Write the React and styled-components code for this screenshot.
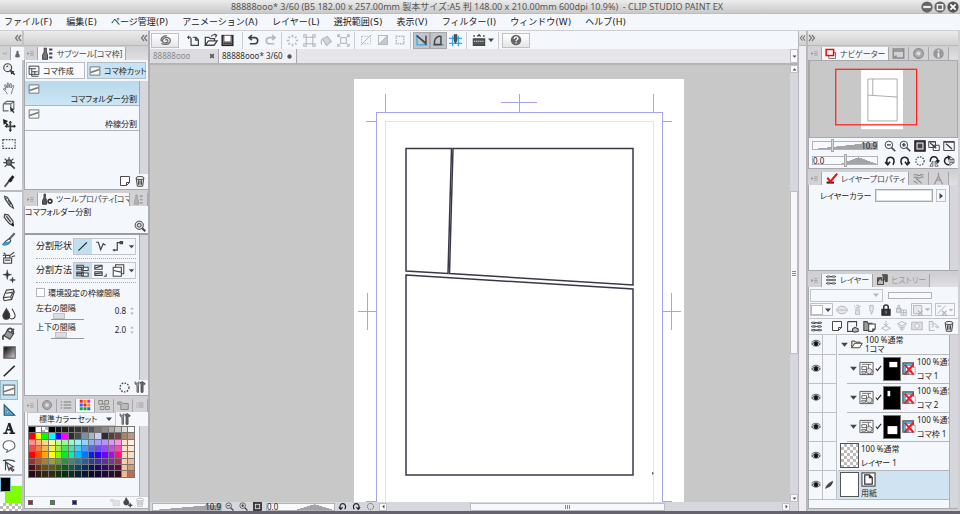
import React, { useState } from 'react';
import styled, { createGlobalStyle, css } from 'styled-components';

const GlobalStyle = createGlobalStyle`
  * {
    box-sizing: border-box;
  }

  body {
    margin: 0;
    color: #222;
    background: #d2d2d6;
    font-family: 'Noto Sans', 'Noto Sans CJK JP', sans-serif;
    font-size: 9px;
    line-height: 12px;
  }

  button, input, select {
    font: inherit;
    color: inherit;
    margin: 0;
    padding: 0;
    border: 0;
    border-radius: 0;
    background: none;
  }

  ul {
    margin: 0;
    padding: 0;
    list-style: none;
  }
`;

/* ---------- icons, all drawn on a 16 x 16 grid ---------- */

const Svg = styled.svg`
  display: block;
  flex: none;
  width: ${({ $w }) => $w}px;
  height: ${({ $h }) => $h}px;
  fill: none;
  stroke: ${({ $color }) => $color};
  stroke-width: 1.3;
  opacity: ${({ $faded }) => ($faded ? 0.35 : 1)};
`;

const icons = {
  zoom: <><circle cx="6.5" cy="6.5" r="4.5" fill="#eee" /><path d="M5 5.5l2-1" /><path d="M9.5 9.5l1 5 1.3-1.7 2.2 2.2 1-1-2.2-2.2 1.7-1z" fill="#222" stroke="none" /><path d="M9 9l4 4" strokeWidth="2" /></>,
  hand: <path d="M6 15c-1-3-3-4-4.500-6 1-1 2 0 3 1L3 4.500c1-.8 1.500 0 1.800 1L6 8 6 2.500c1-.8 1.600 0 1.700 1L8 7.500 9.500 3c1-.4 1.500.3 1.200 1.300L10 8l2.500-3c1-.2 1.300.6.9 1.500L11.500 11c0 2-.5 2-1 4" strokeWidth="1" stroke="#666" />,
  cube: <><path d="M1.500 4.500l4-3h8v8.500l-2 2M1.500 4.500v8h6M1.500 4.500h8.500v5M10 4.500l3.500-3" stroke="#666" /><path d="M9 8l1 6 1.300-1.500L13 15l1.200-1-1.700-2.500 1.500-.7z" fill="#333" stroke="none" /></>,
  move: <><path d="M1 1l1 7 1.600-1.600L6 9l1.400-1.400L4.800 5.200 7 3.500z" fill="#222" stroke="none" /><path d="M9.500 5v9M5 9.500h9" strokeWidth="2" /><path d="M9.500 3l2 2.500h-4zM9.500 16l2-2.500h-4zM3 9.500L5.500 7.500v4zM16 9.500l-2.500-2v4z" fill="#222" stroke="none" /></>,
  marquee: <rect x="1" y="3" width="14" height="10" strokeDasharray="2 1.300" />,
  wand: <><path d="M8 1v4M1.500 7.500h4M10 7.500h4.500M3 3l3 3M13 3l-3 3M3 12.500l3-3" /><circle cx="8" cy="7.500" r="3" fill="#777" /><path d="M9 9l5.500 5.500" strokeWidth="2" /></>,
  dropper: <><path d="M3 14.500L9 7" strokeWidth="2" /><path d="M8 6l3 2.500M9.500 7L13 2.500" strokeWidth="3.400" stroke="#222" /></>,
  pen: <><path d="M3 1.500l3 1 5.500 8.500L13 15l-4-2.500L3.500 4.500z" fill="#e8e8e8" /><path d="M5.500 3.500L3.800 5M10.500 9.500l-2.300 1.800M7 6l3 4.500" /></>,
  pencil: <><path d="M3 1.500L7 2l5.500 7 .5 5.500-4.800-2.500L2.500 5z" fill="#ddd" /><path d="M11 12l2 2.500" stroke="#222" strokeWidth="2.500" /><path d="M5 3.500l5 7" /></>,
  brush: <><path d="M14.500 1.500l-6 6.500" strokeWidth="2.400" stroke="#666" /><path d="M8.500 7.500L5 10c-2 1-2 3-4 4 4 1.500 7 0 9-4z" fill="#fff" /><path d="M1 14.500c3 1 6 0 7-3-2 0-4 0-7 3z" fill="#2d9be8" stroke="#2d9be8" /></>,
  airbrush: <><path d="M2 8h9v6H2zM4 8V5h5v3M9 5l5-3.500M11 6.500l4-1M2 2l2 2M1 5h2" /><path d="M3.500 10.500h6" /></>,
  sparkle: <><path d="M6 1l1 4.500 4 1-4 1-1 4.500-1-4.500-4-1 4-1z" fill="#333" strokeWidth=".6" /><path d="M12 9l.8 2.700 2.700.8-2.700.8L12 16l-.8-2.700-2.700-.8 2.700-.8z" fill="#333" strokeWidth=".4" /></>,
  eraser: <><path d="M5 2.500l8-1 1 3L11 13l-8.500 1.500L1.500 11z" fill="#fff" /><path d="M2 11l8-1 3.500-7M10 10l1 3M4 6l7.500-1" /></>,
  drops: <><path d="M5 2c2.500 4 4 5.500 4 8a4 4 0 0 1-8 0C1 7.500 3 6 5 2z" fill="#333" /><path d="M11.500 2C13.500 6 15 7.500 15 10a3.500 3.500 0 0 1-5.500 3" fill="#fff" /></>,
  fill: <><path d="M6 4l7 4-4 6-6.500-4z" fill="#999" /><path d="M6 4c2-4 7-3 7 4M3 9c-3 1-2 4-1.500 5.500" strokeWidth="2" /><path d="M10 6l4-4" /></>,
  line: <path d="M2 14L14.500 2" strokeWidth="1.800" stroke="#222" />,
  frame: <><path d="M1.500 2.500h13v11h-13z" fill="#f8f8f8" stroke="#777" /><path d="M2 10l12-4" stroke="#777" strokeWidth="2" /></>,
  ruler: <><path d="M2.500 2v12h12z" fill="#57b4ee" stroke="#256" /><path d="M5 8.500V11.500h3.500z" fill="#fff" strokeWidth=".6" /></>,
  text: <><path d="M1.500 14h5M8.500 14h6.500M4 14L8 2.500M6 10h4.500" strokeWidth="1.500" stroke="#222" /><path d="M8 2.500L12 14" strokeWidth="3" stroke="#222" /></>,
  balloon: <path d="M8 2c8 0 9 9 2 10.500L5.500 15l.8-2.500C-1 11 0 2 8 2z" fill="#fff" stroke="#666" />,
  correct: <><path d="M1 3c6-1.500 11-1 14 1M4 3v11" /><path d="M5 5l8 5-3 .8 3.500 3-1.500 1.200-3-3.300L8 14z" fill="#eee" /></>,
  swirl: <path d="M8 8c0-2 3-1 3 .5 0 2-3 3-5 2.200C3 9.500 4 5 8.500 4.500S15 7 13.500 10 6 14 3 11.500M3 9C1 5 6 2 10 2.500" strokeWidth="1.500" stroke="#666" />,
  newDoc: <path d="M2 6V2M0 4h5M5 5v9h9V7l-3-3H7M10.500 4v3.500H14" strokeWidth="1.500" />,
  open: <><path d="M1.500 14V5h4l1.500 1.500h5V9M1.500 14L5 9h10l-3.500 5z" fill="#fff" strokeWidth="1.500" /><path d="M8 4c2-3 4-2 6-1.500M12 1l2.500 1.500L13 5" /></>,
  save: <><rect x="1.500" y="2" width="13" height="12" strokeWidth="1.800" stroke="#222" fill="#ddd" /><path d="M3.500 2v8h9V2" fill="#fff" /><path d="M2 12h12" strokeWidth="2" /></>,
  undo: <path d="M3.500 12H10a3.800 3.800 0 0 0 0-7.500H3M6 1.500L2.500 4.500 6 7.500" strokeWidth="2" />,
  redo: <path d="M12.500 12H6a3.800 3.800 0 0 1 0-7.500h7M10 1.500l3.500 3-3.500 3" strokeWidth="2" />,
  spinner: <path d="M8 1v3M8 12v3M1 8h3M12 8h3M3 3l2 2M11 11l2 2M3 13l2-2M11 5l2-2" strokeWidth="1.900" />,
  ring: <circle cx="8" cy="8" r="5.500" strokeDasharray="2 1.600" strokeWidth="1.600" />,
  nodes: <><rect x="4" y="4" width="8" height="8" /><path d="M1 1h3v3H1zM12 1h3v3h-3zM1 12h3v3H1zM12 12h3v3h-3z" /></>,
  bucket: <path d="M3 6l6-3 5 6-6 5zM3 6c-2 2-2 4-1 7" fill="#999" />,
  warp: <><rect x="4.500" y="4.500" width="7" height="7" /><path d="M1 1l3 3M15 1l-3 3M1 15l3-3M15 15l-3-3M1 4V1h3M12 1h3v3M1 12v3h3M12 15h3v-3" /></>,
  deselect: <><path d="M2 3h12v10H2z" strokeDasharray="2 1.500" /><path d="M1 15L15 1" /></>,
  invert: <><rect x="2" y="2" width="12" height="12" /><path d="M14 2v12H2z" fill="#777" /></>,
  dotted: <rect x="3" y="3" width="10" height="10" strokeDasharray="2 1.300" strokeWidth="2" />,
  snapRuler: <><path d="M2.500 2v11.500h11z" stroke="#2ea8f0" strokeWidth="1.500" /><path d="M2 2l11 9M13.500 2v11.500" strokeWidth="1.800" /></>,
  snapCurve: <><path d="M1 13.500h13.500" stroke="#2ea8f0" strokeWidth="1.800" /><path d="M3 13V9c1-5 5-7 8-6v10z" strokeWidth="1.800" /></>,
  snapGrid: <><path d="M4.500 2v13M11.500 2v13M0 5.500h16M0 11.500h16" stroke="#2ea8f0" strokeWidth="1.500" /><path d="M6.500 1h3v7L8 11 6.500 8z" fill="#555" /></>,
  keyboard: <><path d="M1 14V6h14v8z" fill="#555" /><path d="M2 9h12" stroke="#eee" strokeDasharray="1.500 1" /><path d="M1 2.500h2M13 2.500h2M6 3l2-2 2 2" strokeWidth="1.800" /></>,
  help: <><circle cx="8" cy="8" r="7" fill="#666" stroke="none" /><path d="M5.500 6.500c0-3.500 5-3.500 5-.5 0 1.700-2.500 1.700-2.500 3.500M8 11v1.600" stroke="#fff" strokeWidth="1.700" /></>,
  menu: <><path d="M1 4l4 4-4 4z" fill="#888" stroke="none" /><path d="M7 4h8M7 8h8M7 12h8" stroke="#888" /></>,
  penTool: <><path d="M6.500 6V1.500h3V6L12 10v5H4v-5z" fill="#777" /><path d="M5 10h6" /></>,
  subTool: <><path d="M4 6V1.500h2.500V6L8 10v5H2v-5z" fill="#777" /><path d="M10 3h4M10 8h4M10 13h4" strokeWidth="2.400" /></>,
  toolProp: <><path d="M4 6V1.500h2V6l1.500 4v5H2v-5z" fill="#555" /><circle cx="12" cy="11" r="2.500" strokeWidth="2.200" stroke="#333" /></>,
  frameMake: <><path d="M1.500 1.500h13v11h-13zM1.500 5h9M5 5v10h9M9 8v5" /><path d="M5 9h8" /></>,
  page: <path d="M2 2h12v8l-4 4H2zM14 10h-4v4" fill="#fff" />,
  trash: <><path d="M3 5l1.500 10h7L13 5z" fill="#e4e4e4" /><ellipse cx="8" cy="4" rx="5.500" ry="2" fill="#fff" /><path d="M6 7v6M8 7v6M10 7v6" /></>,
  wrench: <><path d="M4 15V6L1.500 4V1l1.500 2h2l1.500-2v3L6 6v9z" fill="#999" stroke="#666" /><path d="M8 2l4-1 3 3-2 .5-1-1V15h-2.500V4z" fill="#777" /></>,
  searchMark: <><circle cx="7" cy="7" r="5.500" fill="#ddd" /><circle cx="7" cy="7" r="2.500" /><path d="M11 11l4 4" strokeWidth="2.600" /></>,
  poly: <path d="M1.500 3h3l3 10L11 5l3 2" strokeWidth="1.600" />,
  step: <path d="M1 13.500h6V3.500h6M3 12v3M11 2v3h3v-3z" strokeWidth="1.600" />,
  splitA: <><path d="M1 1.500h8v5H1zM7 4h8v4H7zM1 10h8v4.500H1zM7 11h8v4H7z" fill="#fff" /><path d="M1 4h6M1 12h6" strokeWidth="2" /></>,
  splitB: <><path d="M1 1.500h9v5H1zM1 9.500h9V14H1z" fill="#fff" /><path d="M1 5l9-3M1 12l9-1" strokeWidth="1.600" /><path d="M12 15h3v-3" /></>,
  splitC: <><path d="M4.500 1h10v11h-10z" /><path d="M1.500 4h10v11h-10z" fill="#fff" /><path d="M2 8l9 2" /></>,
  ball: <><circle cx="8" cy="8" r="6" fill="#aaa" stroke="#888" /><circle cx="8" cy="8" r="2.500" fill="#ddd" stroke="none" /></>,
  lines: <path d="M1 4h2M5 4h10M1 8h2M5 8h10M1 12h2M5 12h10" stroke="#999" strokeWidth="1.700" />,
  colorSet: <><path d="M1 1h4v4H1zM6 6h4v4H6z" fill="#e22" stroke="none" /><path d="M6 1h4v4H6zM11 6h4v4h-4z" fill="#f80" stroke="none" /><path d="M11 1h4v4h-4z" fill="#e2c" stroke="none" /><path d="M1 6h4v4H1zM11 11h4v4h-4z" fill="#26e" stroke="none" /><path d="M1 11h4v4H1zM6 11h4v4H6z" fill="#1a3" stroke="none" /></>,
  blocks: <path d="M1 2h5v5H1zM9 2h5v5H9zM3 10h5v4H3zM10 10h5v4h-5zM6 5l4 5" stroke="#888" fill="#ccc" />,
  folderTab: <path d="M1 4h5l1 2h8v8H5V7H1z" stroke="#888" fill="#bbb" />,
  ink: <><path d="M6 1c2 4 4 5 4 7.500a3.800 3.800 0 0 1-7.500 0C2.500 6 5 5 6 1z" fill="#444" /><path d="M12 9v6M9 12h6" strokeWidth="2" /></>,
  naviMark: <><path d="M5 6h9v8H5z" stroke="#777" /><rect x="1.500" y="2" width="10" height="8" stroke="#f00" strokeWidth="2" fill="#fff" /></>,
  windowTab: <path d="M1.500 2.500h13v11h-13zM1.500 5h13M3 12l3-1" stroke="#888" strokeWidth="1.700" />,
  info: <><circle cx="8" cy="8" r="6.500" fill="#999" stroke="none" /><path d="M8 7v6M8 3.500v2" stroke="#eee" strokeWidth="2.200" /></>,
  minusLens: <><circle cx="6.500" cy="6.500" r="5" /><path d="M4 6.500h5" strokeWidth="1.800" /><path d="M10 10l5 5" strokeWidth="2.200" /></>,
  plusLens: <><circle cx="6.500" cy="6.500" r="5" /><path d="M4 6.500h5M6.500 4v5" strokeWidth="1.800" /><path d="M10 10l5 5" strokeWidth="2.200" /></>,
  fit: <><rect x="1" y="1" width="14" height="14" fill="#333" stroke="#222" /><rect x="4" y="4" width="8" height="8" fill="#444" stroke="#fff" /></>,
  fitBoth: <><path d="M1 2h9v8H1zM7 7h8v7H7z" fill="#fff" /><path d="M3 4l8 7M1 2.500h9" strokeWidth="1.900" /></>,
  fitOne: <><path d="M1 2h14v12H1z" /><path d="M1 2.500h14M4 5l8 7" strokeWidth="2" /></>,
  rotL: <path d="M5 12.500C2 8 4 3 8.500 3S15 8 12 13M1.500 9.500L5 13l3-4" strokeWidth="2.100" stroke="#222" />,
  rotR: <path d="M11 12.500C14 8 12 3 7.500 3S1 8 4 13M14.500 9.500L11 13 8 9" strokeWidth="2.100" stroke="#222" />,
  flipH: <><path d="M3 9c0-9 10-9 10 0M11 7l2 3 2-3" strokeWidth="2" stroke="#222" /><path d="M6.500 8L2.500 15h4zM9.500 8l4 7h-4z" strokeWidth="1" /></>,
  flipV: <><path d="M8 3C0 2 0 13 8 13M6 1l3 2-2 3" strokeWidth="2" stroke="#222" /><path d="M9 2l6 4H9zM9 14l6-4H9zM7 8h9" strokeWidth="1" /></>,
  redTick: <><path d="M2 13h9" stroke="#222" strokeWidth="2.500" /><path d="M3 7l3.500 5L15 2" stroke="#e11" strokeWidth="2.600" /></>,
  hatch: <path d="M2 4c3-3 5 2 8 0s4 0 4 0M2 7c3-3 5 2 8 0s4 0 4 0M5 8l7 6M2 11l5 3" stroke="#888" />,
  compass: <path d="M8 1v4M8 5L3 15M8 5l5 10M6 10h4" stroke="#999" strokeWidth="1.700" />,
  layers: <path d="M1.500 3.500c4-3 9 3 13 0M1.500 8c4-3 9 3 13 0M1.500 12.500c4-3 9 3 13 0M14.500 3.500c-4-3-9 3-13 0M14.500 8c-4-3-9 3-13 0M14.500 12.500c-4-3-9 3-13 0" strokeWidth="1.200" />,
  history: <><path d="M2 5h8v9H2z" fill="#bbb" /><path d="M8 1h7v9h-3" fill="#555" /><path d="M3 10c0-5 5-5 5-1" strokeWidth="2" /></>,
  lens: <><ellipse cx="8" cy="8" rx="7" ry="5" fill="#ccc" /><path d="M2 8h12" /></>,
  lighthouse: <path d="M6 5h4l1 10H5zM6 2h4v3M3 3l2 1M13 3l-2 1M6 9h4" fill="#ccc" />,
  pin: <path d="M5.500 2h5v6L8 15 5.500 8z" fill="#ccc" />,
  lock: <><path d="M5 8V4c0-3.500 6-3.500 6 0v4" strokeWidth="2" stroke="#333" /><rect x="2.500" y="7" width="11" height="8" fill="#333" stroke="#222" /><path d="M8 9v4" stroke="#999" /></>,
  lockAlpha: <><path d="M2 6h6v5H2zM3.500 6V3c0-2 3-2 3 0v3" fill="#aaa" /><path d="M8 8h7v7H8zM8 11.500h7M11.500 8v7" /></>,
  maskX: <><path d="M2 2h11v11H2z" fill="#ccc" /><path d="M8 9l6 6M14 9l-6 6" strokeWidth="1.800" /></>,
  rulerX: <><path d="M2 13L13 2M2 3h5" /><path d="M8 9l6 6M14 9l-6 6" strokeWidth="1.800" /></>,
  vectorPage: <><path d="M2 2h11v6M9 14H2V2" fill="#fff" /><path d="M8 11l3-2 4 2v3l-4 1-3-1z" fill="#bbb" /></>,
  newFolder: <><path d="M1 2h4l1 2h5v9H1z" fill="#999" /><path d="M7 5h8v6l-3 3H7zM15 11h-3v3" fill="#fff" /></>,
  transfer: <path d="M2 11l6 3 6-3-6-3zM8 1v7M5 5l3 3 3-3" />,
  merge: <path d="M2 5l6-3 6 3-6 3zM8 8v6M5 11l3 3 3-3M3 8l5 3 5-3" />,
  mask: <><rect x="1" y="3" width="14" height="10" fill="#bbb" /><circle cx="8" cy="8" r="3" fill="#fff" /></>,
  applyMask: <path d="M3 14V2h5v8M8 5c5 0 6 2 6 5M11 8l3 3 2-3M3 14h7" fill="#ddd" />,
  eye: <><path d="M1 8c3.500-5 10.500-5 14 0-3.500 4.500-10.500 4.500-14 0z" fill="#ccc" stroke="#333" /><circle cx="8" cy="7.500" r="3" fill="#111" stroke="#111" /><path d="M1 5c4-4 10-4 14 0" stroke="#444" /></>,
  folder: <><path d="M1 13V4h4l1.500 1.500H12V8" fill="#ddd" /><path d="M1 13l4-6h10l-3.500 6z" fill="#fffbe8" /></>,
  comicFolder: <><path d="M1 1.500h14v13H1z" fill="#fff" stroke="#555" strokeWidth="1" /><path d="M3 3.500h10M3 6h5v3H3zM10 3.500v4M3 11h4v2H3z" strokeWidth="1" stroke="#666" /><path d="M8 9l3-1.500 3 2v3l-3 1.500-3-1.500z" fill="#ddd" strokeWidth=".8" /></>,
  check: <path d="M2 8l3.500 5L14 2" strokeWidth="2.400" stroke="#222" />,
  noRuler: <><path d="M1 1h12v13H1z" fill="#5cb4e4" stroke="#555" /><path d="M8 6h7v8H8zM4 4h7v7H4z" fill="#fff" stroke="#888" strokeWidth=".8" /><path d="M3 3l10 11M13 3L3 14" stroke="#e8202a" strokeWidth="2.300" /></>,
  paper: <><path d="M1 1h14v14H1z" fill="#fff" stroke="#555" /><path d="M4 3h5l3 3v7H4zM9 3v3h3" fill="#fff" stroke="#333" /></>,
  quill: <path d="M1 15c1-5 5-10 13-13-1 6-5 10-9 11z" fill="#444" stroke="#222" strokeWidth=".8" />,
  chevL: <path d="M8 2L3 8l5 6M14 2L9 8l5 6" strokeWidth="2.400" stroke="#777" />,
  chevR: <path d="M2 2l5 6-5 6M8 2l5 6-5 6" strokeWidth="2.400" stroke="#777" />,
  down: <path d="M2 5h12l-6 7z" fill="#444" stroke="none" />,
  up: <path d="M2 11h12L8 4z" fill="#444" stroke="none" />,
  left: <path d="M11 2v12L4 8z" fill="#444" stroke="none" />,
  right: <path d="M5 2v12l7-6z" fill="#444" stroke="none" />,
  winMin: <><circle cx="8" cy="8" r="7.500" fill="#666" stroke="none" /><path d="M3 8h10" stroke="#eee" strokeWidth="3" /></>,
  winMax: <><circle cx="8" cy="8" r="7.500" fill="#666" stroke="none" /><rect x="4.500" y="5" width="7" height="6.500" stroke="#eee" strokeWidth="2" /></>,
  winClose: <><circle cx="8" cy="8" r="7.500" fill="#555" stroke="none" /><path d="M4.500 4.500l7 7M11.500 4.500l-7 7" stroke="#fff" strokeWidth="2.400" /></>,
  cross: <path d="M3 3l10 10M13 3L3 13" strokeWidth="4" stroke="#555" />,
  dot: <circle cx="8" cy="8" r="5" fill="#555" stroke="none" />,
};

const Icon = ({ name, size = 12, height, color = '#444', faded }) => (
  <Svg viewBox="0 0 16 16" $w={size} $h={height || size} $color={color} $faded={faded} aria-hidden="true">
    {icons[name]}
  </Svg>
);

/* ---------- window frame ---------- */

const AppWindow = styled.div`
  display: flex;
  flex-direction: column;
  min-height: 100vh;
  border-bottom: 3px solid #66626e;
`;

const TitleBar = styled.header`
  display: flex;
  align-items: center;
  height: 14px;
  padding-left: 41px;
  color: #555;
  background: linear-gradient(#ececec, #c9c9c9);
  border-bottom: 1px solid #bdbdbd;
`;

const Title = styled.h1`
  flex: 1;
  margin: 0;
  padding-right: 8px;
  text-align: center;
  font-size: 9px;
  font-weight: 400;
  white-space: pre;
`;

const WindowButtons = styled.div`
  display: flex;
  gap: 1px;
  padding-right: 1px;
`;

const PlainButton = styled.button`
  display: flex;
  align-items: center;
  justify-content: center;
`;

const MenuBar = styled.nav`
  display: flex;
  align-items: center;
  gap: 14px;
  height: 17px;
  padding: 0 4px;
  font-family: 'DejaVu Sans', 'Noto Sans CJK JP', sans-serif;
  background: #f4f7fc;
  border-bottom: 1px solid #cfcfd3;
`;

const MenuItem = styled.button`
  white-space: nowrap;
  line-height: 14px;
`;

const Workspace = styled.main`
  flex: 1;
  display: flex;
`;

const DockHeader = styled.div`
  display: flex;
  align-items: center;
  justify-content: ${({ $side }) => ($side === 'left' ? 'flex-start' : 'flex-end')};
  height: 15px;
  background: linear-gradient(#ececec, #d0d0d2);
  border-bottom: 1px solid #b8b8bc;
`;

const TabStrip = styled.div`
  display: flex;
  height: 14px;
  padding-top: 1px;
  background: linear-gradient(#cfcfd2, #e0e0e2);
`;

const Tab = styled.button`
  display: flex;
  align-items: center;
  flex: ${({ $grow }) => ($grow ? '1 1 0' : 'none')};
  min-width: 0;
  gap: 3px;
  padding: 0 3px;
  overflow: hidden;
  font-size: 8px;
  font-feature-settings: 'palt';
  white-space: nowrap;
  color: ${({ $active }) => ($active ? '#444' : '#999')};
  background: ${({ $active }) => ($active ? '#f4f7fc' : '#d2d2d5')};
  border-right: 1px solid #a6a6aa;
`;

/* ---------- tool column ---------- */

const ToolColumn = styled.aside`
  display: flex;
  flex-direction: column;
  width: 24px;
  background: #f4f7fc;
  border-right: 2px solid #c4c4c8;
`;

const ToolGroup = styled.div`
  display: flex;
  flex-direction: column;
  flex: ${({ $count }) => $count} 1 0;
  border-bottom: 2px solid #b9b9be;
`;

const Tool = styled(PlainButton)`
  flex: 1;
  width: 18px;
  ${({ $active }) => $active && css`
    background: #c4e2f2;
    border: 1px solid #9bb8c8;
  `}
`;

const ColorBox = styled.div`
  display: grid;
  grid-template-columns: 11px 11px;
  grid-template-rows: 15px 11px 8px;
  padding-top: 1px;
`;

const MainColor = styled.button`
  grid-area: 1 / 1;
  z-index: 1;
  background: #000;
  border: 1px solid #79b6dc;
`;

const SubColor = styled.button`
  grid-area: 1 / 1 / 3 / 3;
  margin: 9px 0 0 5px;
  background: #7fff00;
`;

const checker = css`
  background: repeating-conic-gradient(#bbb 0 25%, #fff 0 50%) 0 0 / 6px 6px;
`;

const ClearColor = styled.button`
  grid-area: 3 / 1 / 4 / 3;
  ${checker}
`;

/* ---------- left dock ---------- */

const LeftDock = styled.aside`
  display: flex;
  flex-direction: column;
  width: 126px;
  background: #d0d0d4;
  border-right: 2px solid #aeaeb2;
`;

const Panel = styled.section`
  display: flex;
  flex-direction: column;
  flex: ${({ $flex }) => $flex};
  margin-bottom: 2px;
  background: #f4f7fc;
  border: solid #a8a8ac;
  border-width: 0 0 1px 1px;
`;

const GroupTabs = styled.div`
  display: grid;
  grid-template-columns: repeat(2, minmax(0, 1fr));
  gap: 2px;
  padding: 2px 2px 2px 1px;
`;

const GroupButton = styled.button`
  display: flex;
  align-items: center;
  gap: 3px;
  height: 17px;
  padding: 0 1px;
  white-space: nowrap;
  font-size: 8px;
  font-feature-settings: 'palt';
  background: ${({ $active }) => ($active ? '#c5e3f3' : '#f8fafd')};
  border: 1px solid #b6bcc4;
`;

const Scrollable = styled.div`
  display: flex;
  flex: 1;
`;

const ScrollContent = styled.div`
  flex: 1;
  min-width: 0;
  border-right: 1px solid #aaaaae;
`;

const ScrollGutter = styled.div`
  width: 8px;
  background: #d6d7dc;
`;

const SubToolItem = styled.button`
  display: flex;
  justify-content: space-between;
  width: 100%;
  height: 25px;
  padding: 2px 2px 0 3px;
  font-size: 8px;
  font-feature-settings: 'palt';
  background: ${({ $active }) => ($active ? 'linear-gradient(#b9d9ec, #cde6f4)' : 'none')};
  border-bottom: 1px solid #adb4bc;
`;

const SubToolName = styled.span`
  align-self: flex-end;
  white-space: nowrap;
`;

const PanelFooter = styled.div`
  display: flex;
  align-items: center;
  justify-content: flex-end;
  gap: 3px;
  height: 15px;
  padding-right: 2px;
`;

const PropHeader = styled.div`
  display: flex;
  flex-direction: column;
  height: 29px;
  white-space: nowrap;
  font-size: 8px;
  font-feature-settings: 'palt';
  border-bottom: 2px solid #9c9ca0;
`;

const SearchMark = styled(PlainButton)`
  align-self: flex-end;
  margin: 2px 2px 0 0;
`;

const PropList = styled.div`
  display: flex;
  flex-direction: column;
  margin: 0 3px 0 11px;
`;

const PropRow = styled.div`
  display: flex;
  align-items: center;
  justify-content: space-between;
  height: 24px;
  white-space: nowrap;
  font-feature-settings: 'palt';
  border-bottom: 1px dotted #a8a8ac;
`;

const Choices = styled.div`
  display: flex;
  width: 63px;
  border: 1px solid #c2c6cc;
`;

const Choice = styled(PlainButton)`
  width: ${({ $narrow }) => ($narrow ? '8px' : '18px')};
  height: 15px;
  background: ${({ $active }) => ($active ? '#c0e0f2' : 'transparent')};
`;

const CheckRow = styled.label`
  display: flex;
  align-items: center;
  gap: 3px;
  margin: 4px 0 3px;
  white-space: nowrap;
  font-size: 8px;
`;

const CheckBox = styled.input`
  appearance: none;
  width: 9px;
  height: 9px;
  background: #fff;
  border: 1px solid #b4b4b8;
`;

const SpacingRow = styled.div`
  display: grid;
  grid-template-columns: 1fr auto 8px;
  align-items: center;
  column-gap: 2px;
  height: 19px;
  font-size: 8px;
  font-feature-settings: 'palt';
`;

const SpacingName = styled.label`
  display: flex;
  flex-direction: column;
  line-height: 10px;
`;

const SpacingSlider = styled.input`
  appearance: none;
  width: 33px;
  height: 7px;
  margin-left: 15px;
  border-bottom: 1px solid #999;

  &::-webkit-slider-thumb {
    appearance: none;
    width: 12px;
    height: 6px;
    background: #dcdde0;
    border: 1px solid #c2c2c6;
  }
`;

const Spinner = styled.div`
  display: flex;
  flex-direction: column;
`;

const SetRow = styled.div`
  display: flex;
  align-items: center;
  gap: 3px;
  padding: 0 3px 0 2px;
`;

const SetSelectBox = styled.div`
  display: flex;
  align-items: center;
  width: 89px;
  padding: 0 2px;
  border: 1px solid #c2c6cc;
`;

const SetSelect = styled.select`
  appearance: none;
  flex: 1;
  min-width: 0;
  height: 12px;
  padding-left: 9px;
  font-size: 8px;
  font-feature-settings: 'palt';
`;

const Palette = styled.div`
  display: grid;
  grid-template-columns: repeat(16, 1fr);
  grid-auto-rows: 1fr;
  gap: 1px;
  height: 52px;
  margin: 0 4px 0 3px;
  padding: 1px;
  background: #777;
`;

const Swatch = styled.button`
  background: ${({ $color }) => $color};
  ${({ $color }) => $color === 'clear' && checker}
`;

const PaletteFooter = styled.div`
  display: flex;
  align-items: center;
  gap: 17px;
  height: 12px;
  padding: 0 3px;
  border-top: 1px solid #d0d0d4;
`;

const MiniColor = styled.button`
  width: 5px;
  height: 5px;
  background: ${({ $color }) => $color};
  border: 1px solid #666;
`;

const FooterIcons = styled.div`
  display: flex;
  gap: 2px;
  margin-left: auto;
`;

/* ---------- document area ---------- */

const DocumentArea = styled.section`
  display: flex;
  flex: 1;
  flex-direction: column;
  min-width: 0;
  background: #e6e6ea;
`;

const CommandBar = styled.div`
  display: flex;
  align-items: center;
  height: 18px;
  padding-left: 1px;
  background: #f4f7fc;
`;

const CommandGroup = styled.div`
  display: flex;
  align-items: center;
  padding: 0 ${({ $pad }) => $pad}px;
  border-right: ${({ $last }) => ($last ? 0 : '1px solid #ccc')};
`;

const Command = styled(PlainButton)`
  width: ${({ $wide }) => ($wide ? '28px' : '17px')};
  height: 17px;
  ${({ $wide }) => $wide && css`
    height: 15px;
    background: linear-gradient(#fff, #e6e6e8);
    border: 1px solid #c0c0c4;
  `}
  ${({ $active }) => $active && css`
    background: #c4c5ca;
    border: 1px solid #a8a8ac;
  `}
`;

const DocumentTabs = styled.div`
  display: flex;
  height: 16px;
  font-size: 8px;
  border-bottom: 2px solid #b4b4b8;
`;

const DocumentTab = styled.button`
  display: flex;
  align-items: center;
  justify-content: space-between;
  width: ${({ $active }) => ($active ? '78px' : '69px')};
  height: 14px;
  padding: 0 3px;
  color: ${({ $active }) => ($active ? '#333' : '#888')};
  background: ${({ $active }) => ($active ? '#f0f0f3' : '#dcdce0')};
  border-right: 1px solid #aaaaae;
`;

const ArrowButton = styled(PlainButton)`
  flex: none;
  width: 8px;
  height: ${({ $tall }) => ($tall ? '14px' : '8px')};
  margin-left: ${({ $push }) => ($push ? 'auto' : 0)};
  background: #fafafc;
  border: 1px solid #c0c0c4;
`;

const CanvasRow = styled.div`
  display: flex;
  flex: 1;
  min-height: 0;
`;

const CanvasView = styled.div`
  flex: 1 1 0;
  min-width: 0;
  background: #c8c8c8;
`;

const CanvasDrawing = styled.svg`
  display: block;
  width: 100%;
  height: 100%;
  min-height: 436px;
`;

const ScrollBar = styled.div`
  display: flex;
  flex-direction: ${({ $vertical }) => ($vertical ? 'column' : 'row')};
  flex: ${({ $vertical }) => ($vertical ? 'none' : 1)};
  width: ${({ $vertical }) => ($vertical ? '8px' : 'auto')};
  background: #d6d7dc;
`;

const ScrollSpace = styled.div`
  flex: ${({ $part }) => $part} 1 0;
`;

const ScrollThumb = styled.div`
  display: flex;
  flex: ${({ $part }) => $part} 1 0;
  align-items: center;
  justify-content: center;
  background: #f6f8fc;
  border: 1px solid #bcbcc2;
`;

const Grip = styled.span`
  width: ${({ $vertical }) => ($vertical ? '4px' : '6px')};
  height: ${({ $vertical }) => ($vertical ? '6px' : '4px')};
  background: repeating-linear-gradient(${({ $vertical }) => ($vertical ? '0deg' : '90deg')}, #888 0 1px, transparent 1px 2px);
`;

const StatusBar = styled.div`
  display: flex;
  align-items: center;
  height: 9px;
  padding-left: 2px;
  background: #d6d7dc;
`;

const StatusTools = styled.div`
  display: flex;
  align-items: center;
  gap: 5px;
  padding: 0 4px 0 3px;
`;

const SliderBox = styled.div`
  position: relative;
  flex: none;
  width: ${({ $width }) => $width}px;
  height: ${({ $height }) => $height}px;
`;

const rampFill = 'linear-gradient(to bottom right, transparent 50%, #a4a4a6 51%)';
const hillFill = `${rampFill} 60% 0 / 30% 100% no-repeat, linear-gradient(to bottom left, transparent 50%, #a4a4a6 51%) 100% 0 / 30% 100% no-repeat`;

const Slider = styled.input`
  appearance: none;
  display: block;
  width: 100%;
  height: 100%;
  background: ${({ $shape }) => ($shape === 'hill' ? hillFill : rampFill)};
  background-color: #f8f9fc;
  border: 1px solid #b2b2b6;

  &::-webkit-slider-thumb {
    appearance: none;
    width: 3px;
    height: 13px;
    background: #d4d4d6;
    border: 1px solid #aaa;
    opacity: ${({ $thumb }) => ($thumb ? 1 : 0)};
  }
`;

const SliderValue = styled.output`
  position: absolute;
  top: 0;
  bottom: 0;
  ${({ $side }) => $side}: 1px;
  display: flex;
  align-items: center;
  font-size: 8px;
  pointer-events: none;
`;

/* ---------- right dock ---------- */

const Divider = styled.div`
  width: 10px;
  background: #eeeef2;
  border: solid #b8b8bc;
  border-width: 0 2px 0 1px;
`;

const RightDock = styled.aside`
  display: flex;
  flex-direction: column;
  width: 152px;
  padding-right: 2px;
  background: #d0d0d4;
`;

const NaviView = styled.svg`
  display: block;
  width: 100%;
  height: 78px;
  background: #c8c8c8;
  border: 1px solid #a8a8ac;
`;

const NaviRow = styled.div`
  display: flex;
  align-items: center;
  gap: 3px;
  height: 15px;
  padding-left: 3px;
`;

const NaviIcons = styled.div`
  display: flex;
  flex: 1;
  justify-content: space-between;
  padding: 0 3px;
`;

const ColorRow = styled.div`
  display: flex;
  align-items: center;
  gap: 3px;
  padding: 4px 3px 0 11px;
  white-space: nowrap;
  font-size: 8px;
  font-feature-settings: 'palt';
`;

const ColorField = styled.button`
  flex: 1;
  height: 13px;
  background: #fff;
  border: 1px solid #a8a8ac;
  box-shadow: inset 0 0 0 1px #ddd;
`;

const BlendRow = styled.div`
  display: flex;
  align-items: center;
  gap: 5px;
  padding: 2px 0 0 1px;
`;

const BlendBox = styled.div`
  display: flex;
  align-items: center;
  justify-content: flex-end;
  width: 73px;
  height: 13px;
  padding-right: 2px;
  border: 1px solid #c4c4c8;
`;

const BlendSelect = styled.select`
  appearance: none;
  flex: 1;
`;

const Opacity = styled.input`
  appearance: none;
  width: 44px;
  height: 7px;
  background: #f8f9fc;
  border: 1px solid #b2b2b6;

  &::-webkit-slider-thumb {
    appearance: none;
    width: 1px;
  }
`;

const LayerTools = styled.div`
  display: flex;
  align-items: center;
  justify-content: space-between;
  height: ${({ $height }) => $height}px;
  padding: 0 3px 0 1px;
  border-bottom: 1px solid #c6c6ca;
`;

const BoxedButton = styled(PlainButton)`
  height: 13px;
  border: 1px solid #c2c2c6;
`;

const ColorChip = styled.span`
  width: 12px;
  height: 10px;
  margin-right: 1px;
  background: #fff;
  border: 1px solid #bbb;
`;

const LayerList = styled.ul`
  flex: 1;
  min-width: 0;
  border-right: 1px solid #b0b0b4;
`;

const LayerRow = styled.li`
  display: flex;
  height: ${({ $short }) => ($short ? '20px' : '29px')};
  background: ${({ $active }) => ($active ? '#cfe4f0' : 'none')};
`;

const LayerFlag = styled(PlainButton)`
  width: 14px;
  background: #f4f7fc;
  border: solid #c0c0c4;
  border-width: 0 1px 1px 0;
`;

const LayerBody = styled.div`
  display: flex;
  align-items: center;
  flex: 1;
  gap: ${({ $gap }) => $gap || 2}px;
  min-width: 0;
  overflow: hidden;
  margin-left: ${({ $depth }) => $depth}px;
  padding-left: 2px;
  border-bottom: 1px solid #b4b8be;
`;

const LayerText = styled.div`
  display: flex;
  flex: 1;
  flex-direction: column;
  min-width: 0;
  overflow: hidden;
  white-space: nowrap;
  font-size: 8px;
  line-height: ${({ $tight }) => ($tight ? '9px' : '14px')};
  font-feature-settings: 'palt';
`;

const MaskThumb = styled.svg`
  display: block;
  flex: none;
  width: 18px;
  height: 24px;
  background: #000;
  border: 1px solid #777;
`;

const Thumb = styled.div`
  flex: none;
  width: 19px;
  height: 25px;
  background: #fff;
  border: 1px solid #555;
  ${({ $clear }) => $clear && checker}
`;

const PaperLabel = styled.div`
  font-size: 8px;
  line-height: 11px;
`;

/* ---------- data ---------- */

const menus = [
  'ファイル(F)', '編集(E)', 'ページ管理(P)', 'アニメーション(A)', 'レイヤー(L)',
  '選択範囲(S)', '表示(V)', 'フィルター(I)', 'ウィンドウ(W)', 'ヘルプ(H)',
];

const toolGroups = [
  ['zoom', 'hand', 'cube', 'move', 'marquee', 'wand', 'dropper'],
  ['pen', 'pencil', 'brush', 'airbrush', 'sparkle', 'eraser', 'drops'],
  ['fill', 'gradient', 'line', 'frame', 'ruler', 'text', 'balloon', 'correct'],
];

const palette = [
  '#000 #fff clear #000 #111 #1b1b1b #262626 #333 #444 #555 #777 #8c8c8c #aaa #c4c4c4 #dcdcdc #f6f6f6',
  '#f00 #ff0 #0f0 #0ff #20f #f0f #2b2b2b #4a4a4a #7890a8 #a4b4c8 #c4d2ee #2c2c2c #54423a #6a4c3c #a88470 #b89884',
  '#ff9090 #ffb48c #ffd88c #ffff90 #c8ff90 #90ff98 #90ffcc #90f4ff #90d4ff #90b0ff #a49cff #bc90ff #e490ff #ff90e4 #ffe4d0 #fff0e0',
  '#e85050 #f08050 #f0b850 #f0f050 #a8e850 #50e060 #50e0a8 #50c8f0 #5098f0 #5868f0 #6850f0 #9050f0 #c850e8 #f050b0 #ffe0c8 #ffe8d4',
  '#f00 #ff5000 #ffa800 #ff0 #80ff00 #00f020 #00f0b0 #00c0ff #0078ff #0020ff #2800ff #7000ff #b800ff #ff1080 #ffd8b8 #f8dcc4',
  '#983038 #a85830 #a88030 #a0a030 #70983c #309040 #309070 #307898 #305c98 #303c98 #4030a0 #6030a0 #803098 #a03060 #f8d0ac #e8bc9c',
  '#580810 #683010 #6c5010 #5c6010 #386010 #086018 #086048 #084860 #083060 #081460 #180868 #380868 #500860 #680838 #f4c4a0 #d49c78',
  '#2c0810 #301a10 #342810 #2c3010 #183010 #083010 #083024 #082430 #081830 #080830 #100834 #1c0834 #280830 #300818 #f0b890 #b87050',
].join(' ').split(' ');

const comicLayers = [
  { name: 'コマ 1', mask: [6, 4, 9, 6] },
  { name: 'コマ 2', mask: [4, 4, 3, 6] },
  { name: 'コマ枠 1', mask: [4, 11, 11, 9] },
];

/* ---------- parts ---------- */

const GradientIcon = () => (
  <Svg viewBox="0 0 16 16" $w={13} $h={13} $color="#555" aria-hidden="true">
    <defs>
      <linearGradient id="toolGradient" x1="0" y1="0" x2="1" y2="1">
        <stop offset="0.1" stopColor="#111" />
        <stop offset="1" stopColor="#ddd" />
      </linearGradient>
    </defs>
    <rect x="1" y="1" width="14" height="14" fill="url(#toolGradient)" />
  </Svg>
);

const ToolPalette = ({ tool, onSelect }) => (
  <ToolColumn>
    <DockHeader><PlainButton aria-label="ツールを隠す"><Icon name="chevL" size={8} height={10} /></PlainButton></DockHeader>
    <TabStrip>
      <Tab aria-label="メニュー"><Icon name="menu" size={4} height={9} /></Tab>
      <Tab $active aria-label="ツール"><Icon name="penTool" size={7} height={12} /></Tab>
    </TabStrip>
    {toolGroups.map((group) => (
      <ToolGroup key={group[0]} $count={group.length}>
        {group.map((name) => (
          <Tool key={name} $active={tool === name} onClick={() => onSelect(name)} aria-label={name}>
            {name === 'gradient' ? <GradientIcon /> : <Icon name={name} size={14} />}
          </Tool>
        ))}
      </ToolGroup>
    ))}
    <ColorBox>
      <MainColor aria-label="メインカラー" />
      <SubColor aria-label="サブカラー" />
      <ClearColor aria-label="透明色" />
    </ColorBox>
  </ToolColumn>
);

const Spacing = ({ id, label, value, amount }) => (
  <SpacingRow>
    <SpacingName htmlFor={id}>
      {label}
      <SpacingSlider id={id} type="range" defaultValue={amount} />
    </SpacingName>
    <span>{value}</span>
    <Spinner>
      <PlainButton aria-label={`${label} +`}><Icon name="up" size={6} height={5} faded /></PlainButton>
      <PlainButton aria-label={`${label} -`}><Icon name="down" size={6} height={5} faded /></PlainButton>
    </Spinner>
  </SpacingRow>
);

const SubToolPanel = () => (
  <>
    <TabStrip>
      <Tab aria-label="メニュー"><Icon name="menu" size={7} /></Tab>
      <Tab $active><Icon name="subTool" size={13} />サブツール[コマ枠]</Tab>
    </TabStrip>
    <Panel $flex="131 1 0">
      <GroupTabs>
        <GroupButton><Icon name="frameMake" size={12} />コマ作成</GroupButton>
        <GroupButton $active><Icon name="frame" size={12} />コマ枠カット</GroupButton>
      </GroupTabs>
      <Scrollable>
        <ScrollContent>
          <SubToolItem $active><Icon name="frame" /><SubToolName>コマフォルダー分割</SubToolName></SubToolItem>
          <SubToolItem><Icon name="frame" /><SubToolName>枠線分割</SubToolName></SubToolItem>
        </ScrollContent>
        <ScrollGutter />
      </Scrollable>
      <PanelFooter>
        <PlainButton aria-label="サブツールの複製"><Icon name="page" /></PlainButton>
        <PlainButton aria-label="サブツールの削除"><Icon name="trash" /></PlainButton>
      </PanelFooter>
    </Panel>
  </>
);

const ToolPropertyPanel = () => (
  <>
    <TabStrip>
      <Tab aria-label="メニュー"><Icon name="menu" size={7} /></Tab>
      <Tab $active $grow><Icon name="toolProp" size={12} />ツールプロパティ[コマ枠]</Tab>
      <Tab aria-label="ブラシサイズ"><Icon name="subTool" size={11} faded /></Tab>
    </TabStrip>
    <Panel $flex="193 1 0">
      <PropHeader>
        コマフォルダー分割
        <SearchMark aria-label="サブツール詳細"><Icon name="searchMark" size={12} /></SearchMark>
      </PropHeader>
      <Scrollable>
        <ScrollContent>
          <PropList>
            <PropRow>
              分割形状
              <Choices>
                <Choice $active aria-label="直線"><Icon name="line" size={11} /></Choice>
                <Choice aria-label="折れ線"><Icon name="poly" /></Choice>
                <Choice aria-label="階段"><Icon name="step" /></Choice>
                <Choice $narrow aria-label="その他の形状"><Icon name="down" size={7} /></Choice>
              </Choices>
            </PropRow>
            <PropRow>
              分割方法
              <Choices>
                <Choice $active aria-label="フォルダーを分割"><Icon name="splitA" size={13} /></Choice>
                <Choice aria-label="枠を分割"><Icon name="splitB" size={13} /></Choice>
                <Choice aria-label="複製して分割"><Icon name="splitC" size={13} /></Choice>
                <Choice $narrow aria-label="その他の方法"><Icon name="down" size={7} /></Choice>
              </Choices>
            </PropRow>
            <CheckRow><CheckBox type="checkbox" />環境設定の枠線間隔</CheckRow>
            <Spacing id="gap-x" label="左右の間隔" value="0.8" amount={8} />
            <Spacing id="gap-y" label="上下の間隔" value="2.0" amount={20} />
          </PropList>
        </ScrollContent>
        <ScrollGutter />
      </Scrollable>
      <PanelFooter>
        <PlainButton aria-label="初期設定に戻す"><Icon name="ring" size={13} /></PlainButton>
        <PlainButton aria-label="詳細"><Icon name="wrench" /></PlainButton>
      </PanelFooter>
    </Panel>
  </>
);

const ColorSetPanel = () => (
  <>
    <TabStrip>
      <Tab aria-label="メニュー"><Icon name="menu" size={7} /></Tab>
      <Tab $grow aria-label="カラーサークル"><Icon name="ball" /></Tab>
      <Tab $grow aria-label="カラースライダー"><Icon name="lines" /></Tab>
      <Tab $active aria-label="カラーセット"><Icon name="colorSet" /></Tab>
      <Tab $grow aria-label="中間色"><Icon name="blocks" /></Tab>
      <Tab $grow aria-label="近似色"><Icon name="folderTab" /></Tab>
      <Tab aria-label="ヒストリー"><Icon name="lines" size={8} /></Tab>
    </TabStrip>
    <Panel $flex="98 1 0">
      <SetRow>
        <SetSelectBox>
          <SetSelect aria-label="カラーセット"><option>標準カラーセット</option></SetSelect>
          <Icon name="down" size={8} />
        </SetSelectBox>
        <PlainButton aria-label="カラーセットの編集"><Icon name="wrench" /></PlainButton>
      </SetRow>
      <Scrollable>
        <ScrollContent>
          <Palette>
            {palette.map((color, i) => <Swatch key={i} $color={color} aria-label={color} />)}
          </Palette>
        </ScrollContent>
        <ScrollGutter />
      </Scrollable>
      <PaletteFooter>
        <MiniColor $color="#d11" aria-label="赤" />
        <MiniColor $color="#0b0" aria-label="緑" />
        <MiniColor $color="#20f" aria-label="青" />
        <FooterIcons>
          <Icon name="folderTab" size={10} faded />
          <Icon name="ink" size={11} />
          <Icon name="trash" size={10} faded />
        </FooterIcons>
      </PaletteFooter>
    </Panel>
  </>
);

const Commands = () => (
  <CommandBar>
    <Command $wide aria-label="CLIP STUDIO"><Icon name="swirl" size={15} height={13} /></Command>
    <CommandGroup $pad={6}>
      <Command aria-label="新規"><Icon name="newDoc" size={13} /></Command>
      <Command aria-label="開く"><Icon name="open" size={14} /></Command>
      <Command aria-label="保存"><Icon name="save" size={13} /></Command>
    </CommandGroup>
    <CommandGroup $pad={2}>
      <Command aria-label="取り消し"><Icon name="undo" size={13} /></Command>
      <Command aria-label="やり直し"><Icon name="redo" size={13} faded /></Command>
    </CommandGroup>
    <CommandGroup $pad={2}>
      {['spinner', 'nodes', 'bucket', 'warp'].map((name) => (
        <Command key={name} aria-label={name}><Icon name={name} size={13} faded /></Command>
      ))}
    </CommandGroup>
    <CommandGroup $pad={2}>
      {['deselect', 'invert', 'dotted'].map((name) => (
        <Command key={name} aria-label={name}><Icon name={name} size={12} faded /></Command>
      ))}
    </CommandGroup>
    <CommandGroup $pad={2}>
      <Command $active aria-label="定規にスナップ"><Icon name="snapRuler" size={13} /></Command>
      <Command $active aria-label="特殊定規にスナップ"><Icon name="snapCurve" size={13} /></Command>
      <Command aria-label="グリッドにスナップ"><Icon name="snapGrid" size={13} /></Command>
    </CommandGroup>
    <CommandGroup $pad={3}>
      <Command aria-label="ソフトウェアキーボード"><Icon name="keyboard" size={14} height={13} /></Command>
      <PlainButton aria-label="キーボードの設定"><Icon name="down" size={8} /></PlainButton>
    </CommandGroup>
    <CommandGroup $pad={3} $last>
      <Command $wide aria-label="ヘルプ"><Icon name="help" size={12} /></Command>
    </CommandGroup>
  </CommandBar>
);

const ComicPage = () => (
  <CanvasDrawing viewBox="150 65 640 437" preserveAspectRatio="xMidYMin meet">
    <rect x="354" y="79" width="330" height="423" fill="#fff" />
    <g fill="none" stroke="#a3a3f0" strokeWidth="1" shapeRendering="crispEdges">
      <path d="M376 502V112H662V502" />
      <path d="M385 94v18M653 94v18M519 94v18M501 102h36M366 121h10M662 121h10" />
      <path d="M367 293v37M358 311h18M671 293v37M662 311h19M662 501h10M366 501h10" />
      <path d="M385 502V121H653V502" stroke="#e0e0f6" />
    </g>
    <g fill="none" stroke="#3a3848" strokeWidth="1.500">
      <path d="M406 148.500H451.500L448 273.500L406 271Z" />
      <path d="M453 148.500H633V285L449.500 273.500Z" />
      <path d="M406 275L633 289V475H406Z" />
    </g>
    <path d="M652 472l2 1-2 2z" fill="#555" />
  </CanvasDrawing>
);

const DocumentPane = () => (
  <DocumentArea>
    <Commands />
    <DocumentTabs>
      <DocumentTab>88888ooo<Icon name="cross" size={6} /></DocumentTab>
      <DocumentTab $active>88888ooo* 3/60<Icon name="dot" size={7} /></DocumentTab>
      <ArrowButton $tall $push aria-label="ファイル一覧"><Icon name="down" size={5} /></ArrowButton>
    </DocumentTabs>
    <CanvasRow>
      <CanvasView><ComicPage /></CanvasView>
      <ScrollBar $vertical>
        <ArrowButton aria-label="上へ"><Icon name="up" size={5} /></ArrowButton>
        <ScrollSpace $part={119} />
        <ScrollThumb $part={161}><Grip $vertical /></ScrollThumb>
        <ScrollSpace $part={141} />
        <ArrowButton aria-label="下へ"><Icon name="down" size={5} /></ArrowButton>
      </ScrollBar>
    </CanvasRow>
    <StatusBar>
      <SliderBox $width={70} $height={8}>
        <Slider type="range" aria-label="表示倍率" />
        <SliderValue $side="right">10.9</SliderValue>
      </SliderBox>
      <StatusTools>
        <PlainButton aria-label="縮小"><Icon name="minusLens" size={9} /></PlainButton>
        <PlainButton aria-label="拡大"><Icon name="plusLens" size={9} /></PlainButton>
        <PlainButton aria-label="全体表示"><Icon name="fit" size={9} /></PlainButton>
      </StatusTools>
      <SliderBox $width={69} $height={8}>
        <Slider type="range" $shape="hill" aria-label="回転" />
        <SliderValue $side="left">0.0</SliderValue>
      </SliderBox>
      <StatusTools>
        <PlainButton aria-label="左回転"><Icon name="rotL" size={9} /></PlainButton>
        <PlainButton aria-label="右回転"><Icon name="rotR" size={9} /></PlainButton>
        <PlainButton aria-label="回転をリセット"><Icon name="ring" size={9} /></PlainButton>
      </StatusTools>
      <ScrollBar>
        <ArrowButton aria-label="左へ"><Icon name="left" size={5} /></ArrowButton>
        <ScrollSpace $part={83} />
        <ScrollThumb $part={194}><Grip /></ScrollThumb>
        <ScrollSpace $part={117} />
        <ArrowButton aria-label="右へ"><Icon name="right" size={5} /></ArrowButton>
      </ScrollBar>
      <ScrollGutter />
    </StatusBar>
  </DocumentArea>
);

const NavigatorPanel = () => (
  <>
    <TabStrip>
      <Tab aria-label="メニュー"><Icon name="menu" size={7} /></Tab>
      <Tab $active><Icon name="naviMark" size={12} />ナビゲーター</Tab>
      <Tab aria-label="サブビュー"><Icon name="windowTab" size={13} /></Tab>
      <Tab aria-label="素材"><Icon name="ball" size={13} /></Tab>
      <Tab aria-label="情報"><Icon name="info" size={13} /></Tab>
    </TabStrip>
    <Panel $flex="109 1 0">
      <NaviView viewBox="809 60 148 78">
        <rect x="860" y="69" width="43" height="61" fill="#fff" />
        <path d="M867 78.500h30v43h-30zM872 78.500v17M867 95l30 2" fill="none" stroke="#aaa" />
        <rect x="834" y="68.500" width="83" height="57" fill="none" stroke="#f22" strokeWidth="1.300" />
      </NaviView>
      <NaviRow>
        <SliderBox $width={66} $height={9}>
          <Slider type="range" defaultValue={30} $thumb aria-label="ナビゲーター倍率" />
          <SliderValue $side="right">10.9</SliderValue>
        </SliderBox>
        <NaviIcons>
          {['minusLens', 'plusLens', 'fit', 'fitBoth', 'fitOne'].map((name) => (
            <PlainButton key={name} aria-label={name}><Icon name={name} size={12} /></PlainButton>
          ))}
        </NaviIcons>
      </NaviRow>
      <NaviRow>
        <SliderBox $width={66} $height={9}>
          <Slider type="range" defaultValue={50} $thumb $shape="hill" aria-label="ナビゲーター回転" />
          <SliderValue $side="left">0.0</SliderValue>
        </SliderBox>
        <NaviIcons>
          {['rotL', 'rotR', 'ring', 'flipH', 'flipV'].map((name) => (
            <PlainButton key={name} aria-label={name}><Icon name={name} size={12} /></PlainButton>
          ))}
        </NaviIcons>
      </NaviRow>
    </Panel>
  </>
);

const LayerPropertyPanel = () => (
  <>
    <TabStrip>
      <Tab aria-label="メニュー"><Icon name="menu" size={7} /></Tab>
      <Tab $active><Icon name="redTick" size={13} />レイヤープロパティ</Tab>
      <Tab aria-label="レイヤー検索"><Icon name="hatch" size={13} /></Tab>
      <Tab aria-label="定規"><Icon name="compass" size={13} /></Tab>
    </TabStrip>
    <Panel $flex="86 1 0">
      <Scrollable>
        <ScrollContent>
          <ColorRow>
            レイヤーカラー
            <ColorField aria-label="レイヤーカラー" />
            <BoxedButton aria-label="レイヤーカラーを選ぶ"><Icon name="right" size={8} /></BoxedButton>
          </ColorRow>
        </ScrollContent>
        <ScrollGutter />
      </Scrollable>
    </Panel>
  </>
);

const LayerFlags = ({ editing }) => (
  <>
    <LayerFlag aria-label="表示"><Icon name="eye" size={10} /></LayerFlag>
    <LayerFlag aria-label="編集">{editing && <Icon name="quill" size={9} />}</LayerFlag>
  </>
);

const LayerPanel = () => (
  <>
    <TabStrip>
      <Tab aria-label="メニュー"><Icon name="menu" size={7} /></Tab>
      <Tab $active><Icon name="layers" size={12} />レイヤー</Tab>
      <Tab><Icon name="history" size={12} />ヒストリー</Tab>
    </TabStrip>
    <Panel $flex="224 1 0">
      <BlendRow>
        <BlendBox>
          <BlendSelect aria-label="合成モード" />
          <Icon name="down" size={8} faded />
        </BlendBox>
        <Opacity type="range" aria-label="不透明度" />
      </BlendRow>
      <LayerTools $height={17}>
        <BoxedButton aria-label="パレットカラー"><ColorChip /><Icon name="down" size={8} /></BoxedButton>
        <Icon name="lens" faded />
        <Icon name="lighthouse" size={11} faded />
        <Icon name="pin" size={11} faded />
        <PlainButton aria-label="レイヤーをロック"><Icon name="lock" /></PlainButton>
        <Icon name="lockAlpha" faded />
        <BoxedButton aria-label="マスクを有効化"><Icon name="maskX" faded /><Icon name="down" size={7} faded /></BoxedButton>
        <BoxedButton aria-label="定規の表示範囲"><Icon name="rulerX" faded /><Icon name="down" size={6} faded /></BoxedButton>
      </LayerTools>
      <LayerTools $height={16}>
        <Icon name="layers" size={13} />
        <span />
        <PlainButton aria-label="新規ラスターレイヤー"><Icon name="page" /></PlainButton>
        <PlainButton aria-label="新規ベクターレイヤー"><Icon name="vectorPage" size={13} /></PlainButton>
        <PlainButton aria-label="新規レイヤーフォルダー"><Icon name="newFolder" size={13} /></PlainButton>
        <Icon name="transfer" faded />
        <Icon name="merge" faded />
        <Icon name="mask" faded />
        <Icon name="applyMask" faded />
        <PlainButton aria-label="レイヤーを削除"><Icon name="trash" /></PlainButton>
      </LayerTools>
      <Scrollable>
        <LayerList>
          <LayerRow $short>
            <LayerFlags />
            <LayerBody $depth={1}>
              <Icon name="down" size={9} color="#000" />
              <Icon name="folder" size={12} />
              <LayerText $tight><span>100 %通常</span><span>1コマ</span></LayerText>
            </LayerBody>
          </LayerRow>
          {comicLayers.map(({ name, mask: [x, y, width, height] }) => (
            <LayerRow key={name}>
              <LayerFlags />
              <LayerBody $depth={10} $gap={1}>
                <Icon name="down" size={9} color="#000" />
                <Icon name="comicFolder" size={15} />
                <Icon name="check" size={7} />
                <MaskThumb viewBox="0 0 18 24">
                  <rect x={x} y={y} width={width} height={height} fill="#fff" />
                </MaskThumb>
                <Icon name="noRuler" size={14} />
                <LayerText><span>100 %通常</span><span>{name}</span></LayerText>
              </LayerBody>
            </LayerRow>
          ))}
          <LayerRow>
            <LayerFlags />
            <LayerBody $depth={1}>
              <Thumb $clear />
              <LayerText><span>100 %通常</span><span>レイヤー 1</span></LayerText>
            </LayerBody>
          </LayerRow>
          <LayerRow $active>
            <LayerFlags editing />
            <LayerBody $depth={1}>
              <Thumb />
              <PaperLabel><Icon name="paper" size={15} />用紙</PaperLabel>
            </LayerBody>
          </LayerRow>
        </LayerList>
        <ScrollGutter />
      </Scrollable>
    </Panel>
  </>
);

const App = () => {
  const [tool, setTool] = useState('frame');

  return (
    <>
      <GlobalStyle />
      <AppWindow lang="ja">
        <TitleBar>
          <Title>88888ooo* 3/60 (B5 182.00 x 257.00mm 製本サイズ:A5 判 148.00 x 210.00mm 600dpi 10.9%)  - CLIP STUDIO PAINT EX</Title>
          <WindowButtons>
            <PlainButton aria-label="最小化"><Icon name="winMin" size={12} /></PlainButton>
            <PlainButton aria-label="最大化"><Icon name="winMax" size={12} /></PlainButton>
            <PlainButton aria-label="閉じる"><Icon name="winClose" size={12} /></PlainButton>
          </WindowButtons>
        </TitleBar>
        <MenuBar>
          {menus.map((label) => <MenuItem key={label}>{label}</MenuItem>)}
        </MenuBar>
        <Workspace>
          <ToolPalette tool={tool} onSelect={setTool} />
          <LeftDock>
            <DockHeader><PlainButton aria-label="パレットを隠す"><Icon name="chevL" size={8} height={10} /></PlainButton></DockHeader>
            <SubToolPanel />
            <ToolPropertyPanel />
            <ColorSetPanel />
          </LeftDock>
          <DocumentPane />
          <Divider>
            <DockHeader><PlainButton aria-label="素材パレット"><Icon name="chevL" size={7} height={10} /></PlainButton></DockHeader>
          </Divider>
          <RightDock>
            <DockHeader $side="left"><PlainButton aria-label="右パレットを隠す"><Icon name="chevR" size={8} height={10} /></PlainButton></DockHeader>
            <NavigatorPanel />
            <LayerPropertyPanel />
            <LayerPanel />
          </RightDock>
        </Workspace>
      </AppWindow>
    </>
  );
};

export default App;
